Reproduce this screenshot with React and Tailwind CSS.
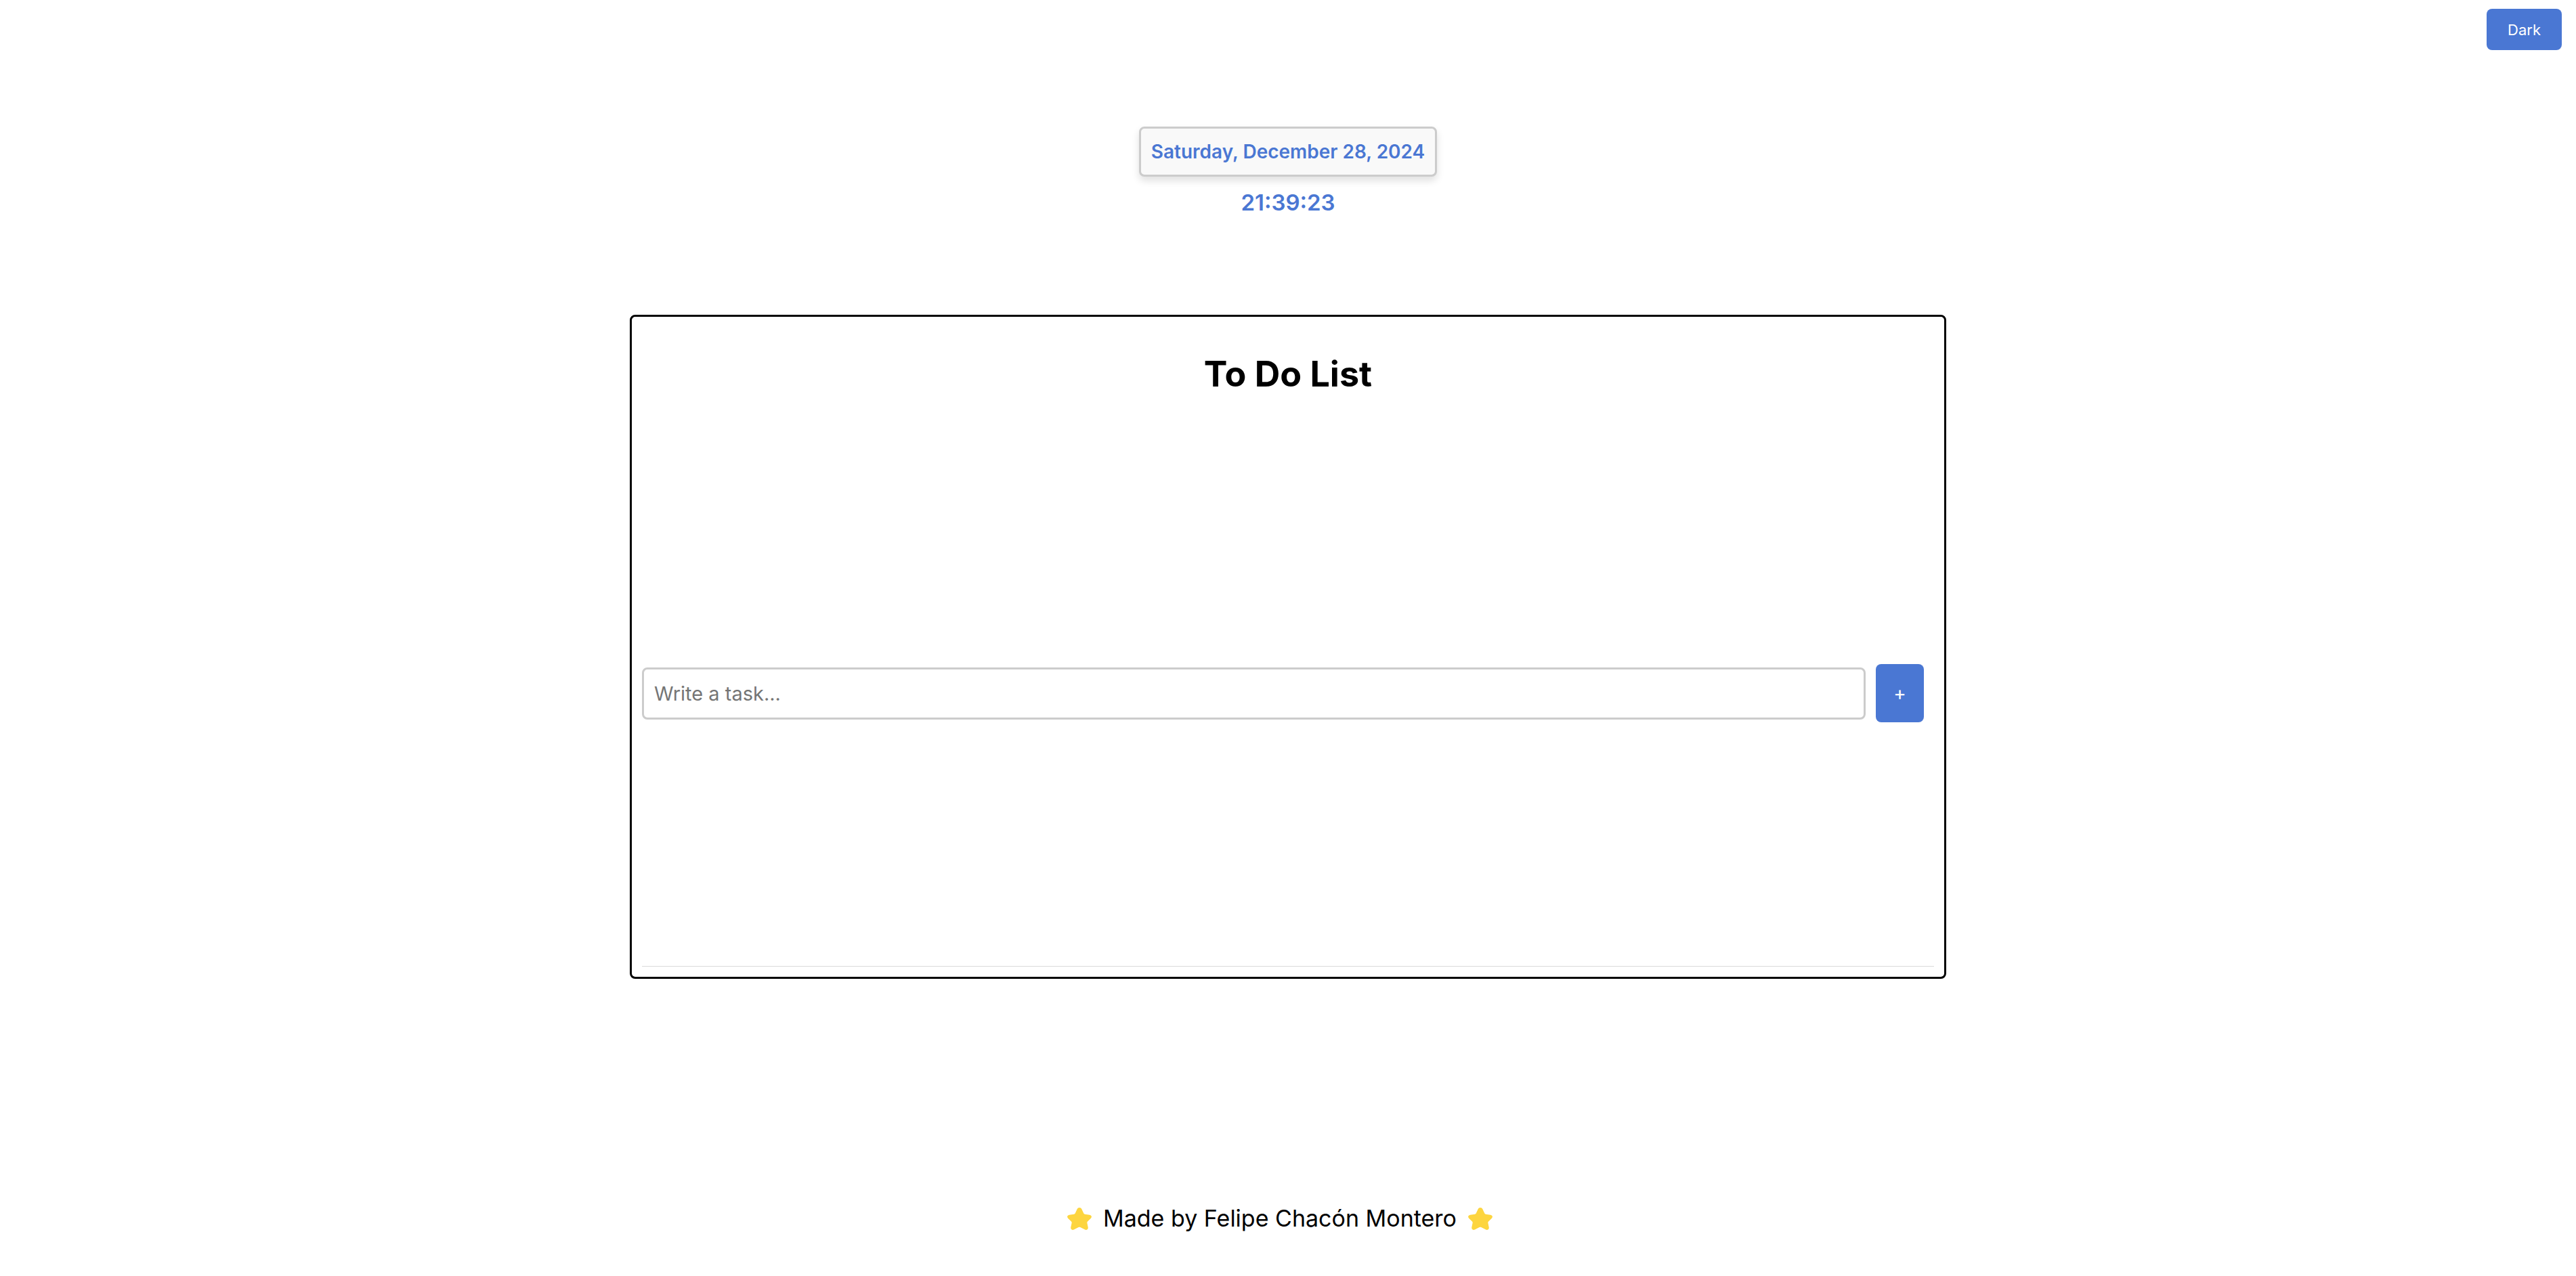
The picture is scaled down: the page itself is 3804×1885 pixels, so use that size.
import { useState } from "react";

function Star() {
  return (
    <svg viewBox="0 0 36 33" className="h-[33px] w-9 shrink-0" aria-hidden="true">
      <path
        d="M18 0 C19.6 0 20.7 0.9 21.4 2.3 L24.2 8.2 C24.6 9.1 25.2 9.5 26.1 9.7 L33 10.7 C35.8 11.2 36.8 13.7 34.9 15.7 L30 20.6 C29.4 21.2 29.2 21.8 29.4 22.7 L30.7 29 C31.2 32.2 28.9 33.7 26.2 32.5 L19.4 29.1 C18.4 28.6 17.6 28.6 16.6 29.1 L9.8 32.5 C7.1 33.7 4.8 32.2 5.3 29 L6.6 22.7 C6.8 21.8 6.6 21.2 6 20.6 L1.1 15.7 C-0.8 13.7 0.2 11.2 3 10.7 L9.9 9.7 C10.8 9.5 11.4 9.1 11.8 8.2 L14.6 2.3 C15.3 0.9 16.4 0 18 0 Z"
        fill="#FDD53F"
      />
    </svg>
  );
}

export default function App() {
  const [task, setTask] = useState("");
  return (
    <div className="flex min-h-screen flex-col items-center bg-white font-['Inter','Liberation_Sans',sans-serif] text-black">
      <div className="flex w-full justify-end pt-[13px] pr-[21px]">
        <button type="button" className="h-[61px] w-[111px] rounded-lg bg-[#4a77d3] text-[22px] leading-8 text-white">
          Dark
        </button>
      </div>

      <header className="mt-[113px] flex flex-col items-center gap-[18px] text-[#4a77d3]">
        <p className="rounded-lg border-3 border-[#ccc] bg-[#f9f9f9] px-[15px] py-[14px] text-[28px] leading-10 font-semibold shadow-[0_6px_12px_rgba(0,0,0,0.12)]">
          Saturday, December 28, 2024
        </p>
        <time className="text-[33px] leading-10 font-semibold">21:39:23</time>
      </header>

      <main className="mt-[146px] flex min-h-[981px] w-[51.1%] flex-col rounded-lg border-3 border-black p-[15px]">
        <h1 className="mt-9 mb-[34px] text-center text-[52px] leading-[68px] font-bold">To Do List</h1>
        <form className="my-auto flex items-center gap-[15px] pr-[15px]" onSubmit={(e) => e.preventDefault()}>
          <input
            type="text"
            aria-label="Task"
            placeholder="Write a task..."
            value={task}
            onChange={(e) => setTask(e.target.value)}
            className="h-[77px] min-w-0 grow rounded-lg border-3 border-[#ccc] bg-white px-[15px] text-[29px] placeholder:text-[#757575]"
          />
          <button type="submit" aria-label="Add task" className="h-[86px] w-[71px] rounded-lg bg-[#4a77d3] text-[28px] text-white">
            +
          </button>
        </form>
        <hr className="border-t border-[#dadada]" />
      </main>

      <footer className="mt-auto flex items-center gap-[17px] pr-6 pb-[60px] text-[34px] leading-[50px]">
        <Star />
        <span>Made by Felipe Chacón Montero</span>
        <Star />
      </footer>
    </div>
  );
}
